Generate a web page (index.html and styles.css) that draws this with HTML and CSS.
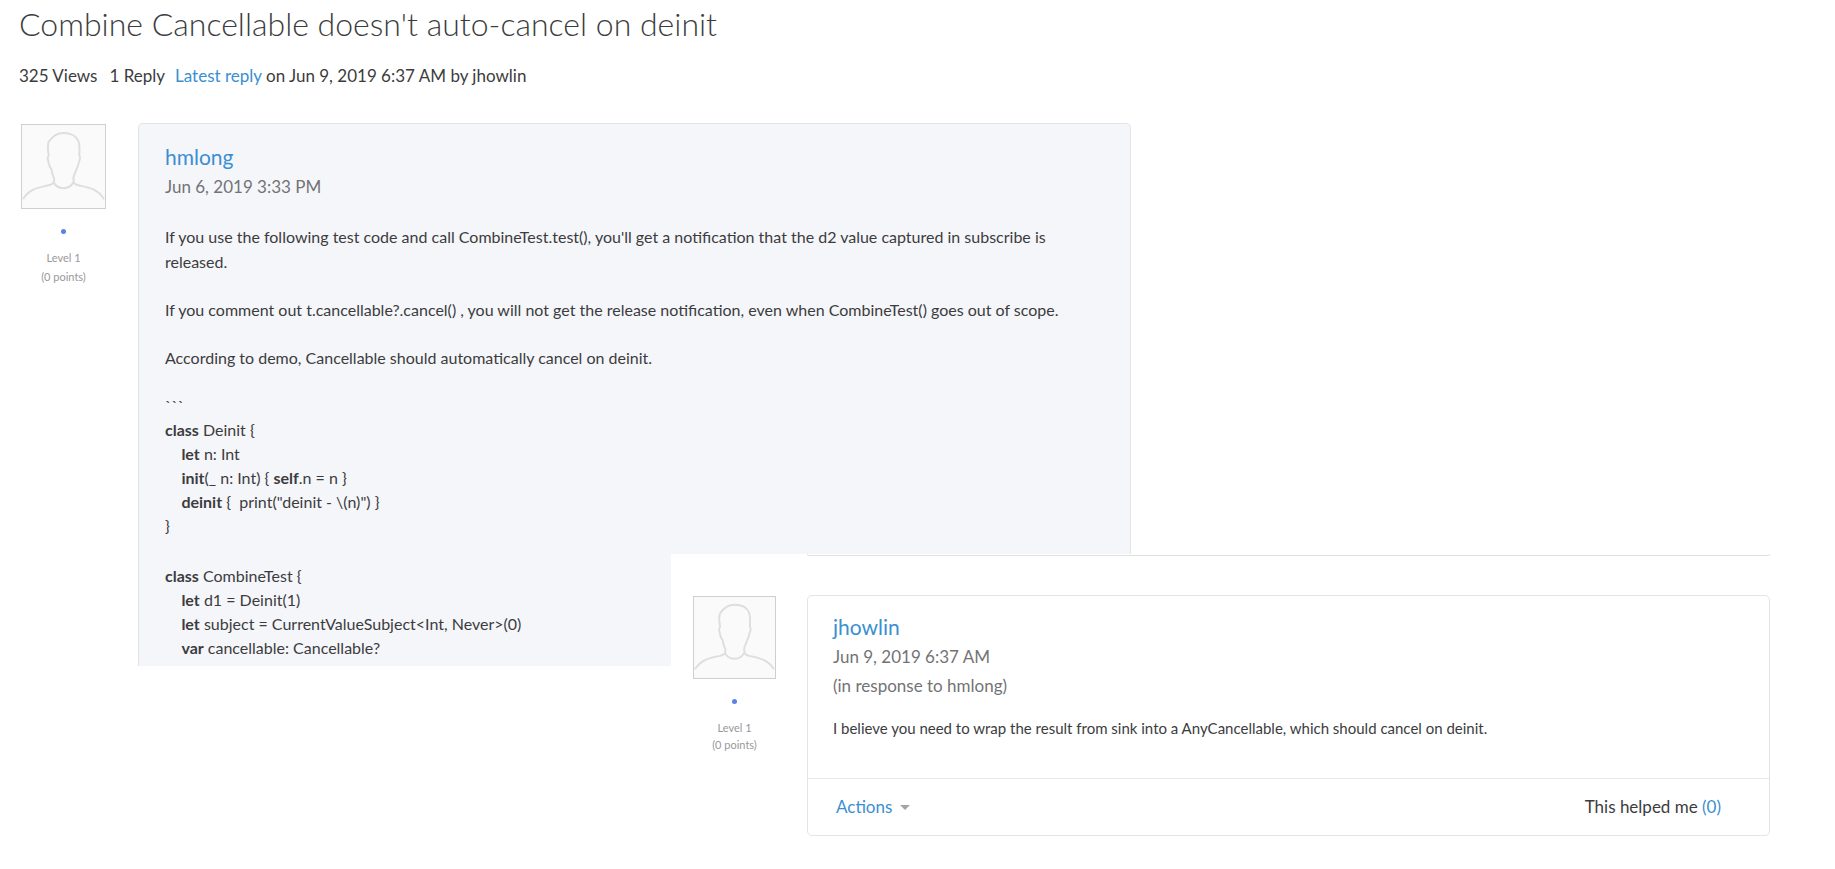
FILE: index.html
```html
<!DOCTYPE html>
<html lang="en">
<head>
    <meta charset="UTF-8">
    <meta name="viewport" content="width=device-width, initial-scale=1.0">
    <title>Combine Cancellable doesn't auto-cancel on deinit</title>
    <link rel="stylesheet" href="styles.css">
</head>
<body>
<svg class="sprite" aria-hidden="true">
    <symbol id="person" viewBox="0 0 84 84">
        <path d="M1 75 C8 64 18 63 27 61 C31 60 33 59 32.5 54 C31 50 30 49 30 45 C27 42 27 38 26 34 C26 32 27 32 27 30 C26 25 26 20 27 17 C31 11 36 8 42 8 C49 8 55 11 57 16 C59 21 58 26 58 31 C59 32 59 33 58.5 35 C57 38 57 42 55 45 C54 49 52 51 52 54 C52 59 53 60 57 61 C66 63 76 64 83 75"/>
        <path d="M32 58 C34 62 37 64 42 64 C47 64 50 62 52 58"/>
    </symbol>
</svg>

<header class="thread-header">
    <h1 class="thread-title">Combine Cancellable doesn't auto-cancel on deinit</h1>
    <div class="thread-meta">
        <span class="views">325 Views</span>
        <span class="replies">1 Reply</span>
        <span><a href="#reply">Latest reply</a> on Jun 9, 2019 6:37 AM by jhowlin</span>
    </div>
</header>

<main>
    <article class="post">
        <aside class="author">
            <svg class="avatar" role="img" aria-label="hmlong"><use href="#person"/></svg>
            <span class="dot"></span>
            <span class="level">Level 1</span>
            <span class="level">(0 points)</span>
        </aside>
        <div class="card card-question">
            <a class="name" href="#">hmlong</a>
            <div class="date">Jun 6, 2019 3:33 PM</div>
            <div class="message">
                <p>If you use the following test code and call CombineTest.test(), you'll get a notification that the d2 value captured in subscribe is released.</p>
                <p>If you comment out t.cancellable?.cancel() , you will not get the release notification, even when CombineTest() goes out of scope.</p>
                <p>According to demo, Cancellable should automatically cancel on deinit.</p>
                <div class="code">
                    <div>```</div>
                    <div><b>class</b> Deinit {</div>
                    <div>    <b>let</b> n: Int</div>
                    <div>    <b>init</b>(_ n: Int) { <b>self</b>.n = n }</div>
                    <div>    <b>deinit</b> {  print("deinit - \(n)") }</div>
                    <div>}</div>
                    <div class="blank"></div>
                    <div><b>class</b> CombineTest {</div>
                    <div>    <b>let</b> d1 = Deinit(1)</div>
                    <div>    <b>let</b> subject = CurrentValueSubject&lt;Int, Never&gt;(0)</div>
                    <div>    <b>var</b> cancellable: Cancellable?</div>
                </div>
            </div>
        </div>
    </article>

    <!-- reply panel sits over the bottom right of the question -->
    <section class="reply-panel" id="reply">
        <div class="card-end"></div>
        <article class="post">
            <aside class="author">
                <svg class="avatar" role="img" aria-label="jhowlin"><use href="#person"/></svg>
                <span class="dot"></span>
                <span class="level">Level 1</span>
                <span class="level">(0 points)</span>
            </aside>
            <div class="card card-reply">
                <div class="card-body">
                    <a class="name" href="#">jhowlin</a>
                    <div class="date">Jun 9, 2019 6:37 AM</div>
                    <div class="date">(in response to hmlong)</div>
                    <p class="answer">I believe you need to wrap the result from sink into a AnyCancellable, which should cancel on deinit.</p>
                </div>
                <footer class="card-footer">
                    <button type="button" class="actions">Actions <span class="caret"></span></button>
                    <span>This helped me <a href="#">(0)</a></span>
                </footer>
            </div>
        </article>
    </section>
</main>
</body>
</html>
```
FILE: styles.css
```css
* {
    box-sizing: border-box;
}
body {
    margin: 0;
    background-color: #fff;
    color: #3c3c3e;
    font-family: Lato, "Liberation Sans", sans-serif;
    font-size: 17px;
    line-height: 24px;
}
a {
    color: #3a8fd0;
    text-decoration: none;
}
.sprite {
    display: none;
}

/* thread header */
.thread-header {
    padding: 4px 19px 0;
}
.thread-title {
    margin: 0;
    font-size: 32px;
    line-height: 40px;
    font-weight: 300;
}
.thread-meta {
    display: flex;
    gap: 10px;
    margin-top: 20px;
}
.views {
    margin-right: 2px;
}

/* posts */
.post {
    display: flex;
    align-items: flex-start;
}
main > .post {
    max-width: 1131px;
    padding-left: 21px;
    margin-top: 35px;
}
.author {
    display: flex;
    flex-direction: column;
    align-items: center;
    flex: none;
    width: 85px;
    padding-top: 1px;
    margin-right: 32px;
}
.avatar {
    width: 85px;
    height: 85px;
    border: 1px solid #cfcfcf;
    background-color: #fafafa;
    fill: none;
    stroke: #dedede;
    stroke-width: 2;
}
.dot {
    width: 5px;
    height: 5px;
    margin: 20px 0 14px;
    border-radius: 50%;
    background-color: #5b82e3;
}
.level {
    color: #98989b;
    font-size: 11px;
    line-height: 19px;
}
.card {
    flex: 1;
    min-width: 0;
    border: 1px solid #e3e4e6;
    border-radius: 5px;
}
.card-question {
    padding: 18px 60px 6px 26px;
    border-bottom: none;
    border-radius: 5px 5px 0 0;
    background-color: #f5f6fa;
}
.name {
    display: block;
    font-size: 21px;
    line-height: 30px;
}
.date {
    color: #737376;
    line-height: 29px;
}
.message {
    margin-top: 23px;
    font-size: 16px;
    line-height: 25px;
}
.message p {
    margin: 0 0 23px;
}
.code {
    padding-top: 1px;
    line-height: 24px;
}
.code div {
    white-space: pre-wrap;
}
.code .blank {
    height: 26px;
}

/* reply */
.reply-panel {
    position: relative;
    margin: -112px 0 0 671px;
    padding: 0 65px 32px 22px;
    background-color: #fff;
}
.card-end {
    height: 2px;
    margin-left: 114px;
    border: 1px solid #dfe0e2;
    border-top: none;
    border-radius: 0 0 5px 5px;
}
.reply-panel .post {
    margin-top: 39px;
}
.reply-panel .avatar {
    width: 83px;
    height: 83px;
}
.reply-panel .dot {
    margin-bottom: 15px;
}
.reply-panel .level {
    line-height: 17px;
}
.reply-panel .author {
    width: 83px;
    margin-right: 31px;
}
.card-body {
    padding: 16px 25px 37px;
}
.answer {
    margin: 16px 0 0;
    font-size: 15px;
    line-height: 25px;
}
.card-footer {
    display: flex;
    align-items: center;
    justify-content: space-between;
    padding: 16px 48px 16px 28px;
    border-top: 1px solid #e9e9eb;
}
.actions {
    display: flex;
    align-items: center;
    gap: 8px;
    padding: 0;
    border: none;
    background: none;
    color: #3a8fd0;
    font: inherit;
    cursor: pointer;
}
.caret {
    border: 5px solid transparent;
    border-top-color: #a5a5a8;
    border-bottom: none;
}
```
